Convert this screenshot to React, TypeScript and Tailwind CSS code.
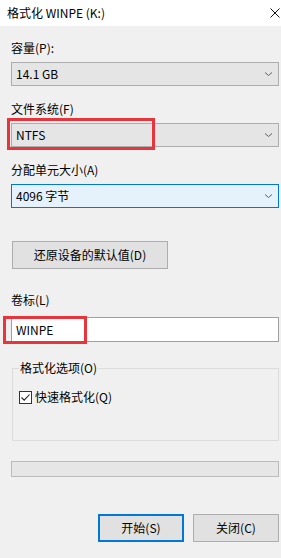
const font = { fontFamily: '"Noto Sans CJK SC", "Noto Sans", sans-serif' };

function Chevron() {
  return (
    <svg width="9" height="6" viewBox="0 0 9 6" className="shrink-0">
      <path d="M1 1.5 L4.5 4.5 L8 1.5" fill="none" stroke="#606060" strokeWidth="1" />
    </svg>
  );
}

function Combo({ value, focused }: { value: string; focused?: boolean }) {
  return (
    <div
      className={`h-[24px] flex items-center justify-between pl-[4px] pr-[5px] border ${
        focused ? 'bg-[#e5f1fb] border-[#0078d7]' : 'bg-[#e5e5e5] border-[#adadad]'
      }`}
    >
      <span className="text-[12px] text-black leading-none">{value}</span>
      <Chevron />
    </div>
  );
}

export default function App() {
  return (
    <div className="w-[281px] h-[558px] bg-[#f0f0f0] flex flex-col text-black" style={font}>
      {/* Title bar */}
      <div className="h-[26px] bg-white flex items-center justify-between pl-[7px] pr-[1px] shrink-0">
        <span className="text-[12px] leading-none">格式化 WINPE (K:)</span>
        <svg width="10" height="10" viewBox="0 0 10 10" className="shrink-0">
          <path d="M0.5 0.5 L9.5 9.5 M9.5 0.5 L0.5 9.5" stroke="#111" strokeWidth="1" fill="none" />
        </svg>
      </div>

      <div className="flex flex-col pl-[11px] pr-[2px]">
        <div className="mt-[14px] h-[16px] text-[12px] leading-[16px]">容量(P):</div>
        <div className="mt-[6px]">
          <Combo value="14.1 GB" />
        </div>

        <div className="mt-[15px] h-[16px] text-[12px] leading-[16px]">文件系统(F)</div>
        <div className="mt-[6px] relative">
          <Combo value="NTFS" />
          <div className="absolute left-[-4px] top-[-5px] w-[148px] h-[32px] border-[3px] border-[#e8343b]" />
        </div>

        <div className="mt-[15px] h-[16px] text-[12px] leading-[16px]">分配单元大小(A)</div>
        <div className="mt-[6px]">
          <Combo value="4096 字节" focused />
        </div>

        <div className="mt-[33px] ml-[1px] w-[156px] h-[28px] bg-[#e1e1e1] border border-[#adadad] flex items-center justify-center text-[12px]">
          还原设备的默认值(D)
        </div>

        <div className="mt-[23px] h-[16px] text-[12px] leading-[16px]">卷标(L)</div>
        <div className="mt-[9px] relative">
          <div className="h-[25px] bg-white border border-[#a0a0a0] flex items-center pl-[4px] text-[12px]">
            WINPE
          </div>
          <div className="absolute left-[-8px] top-[-1px] w-[84px] h-[28px] border-[3px] border-[#e8343b]" />
        </div>

        <fieldset className="mt-[18px] ml-[1px] h-[81px] border border-[#dcdcdc] px-[6px]">
          <legend className="px-[1px] text-[12px] leading-[16px]">格式化选项(O)</legend>
          <div className="mt-[13px] flex items-center gap-[3px] h-[16px]">
            <div className="w-[13px] h-[13px] border border-[#333333] bg-white flex items-center justify-center">
              <svg width="11" height="11" viewBox="0 0 11 11">
                <path d="M1.5 5.5 L4.2 8.2 L9.5 2.5" fill="none" stroke="#222" strokeWidth="1.1" />
              </svg>
            </div>
            <span className="text-[12px] leading-[16px]">快速格式化(Q)</span>
          </div>
        </fieldset>

        <div className="mt-[20px] h-[16px] bg-[#e6e6e6] border border-[#bcbcbc]" />

        <div className="mt-[37px] flex justify-end gap-[9px]">
          <div className="w-[86px] h-[28px] bg-[#e1e1e1] border-2 border-[#0078d7] flex items-center justify-center text-[12px]">
            开始(S)
          </div>
          <div className="w-[86px] h-[28px] bg-[#e1e1e1] border border-[#adadad] flex items-center justify-center text-[12px]">
            关闭(C)
          </div>
        </div>
      </div>
    </div>
  );
}
